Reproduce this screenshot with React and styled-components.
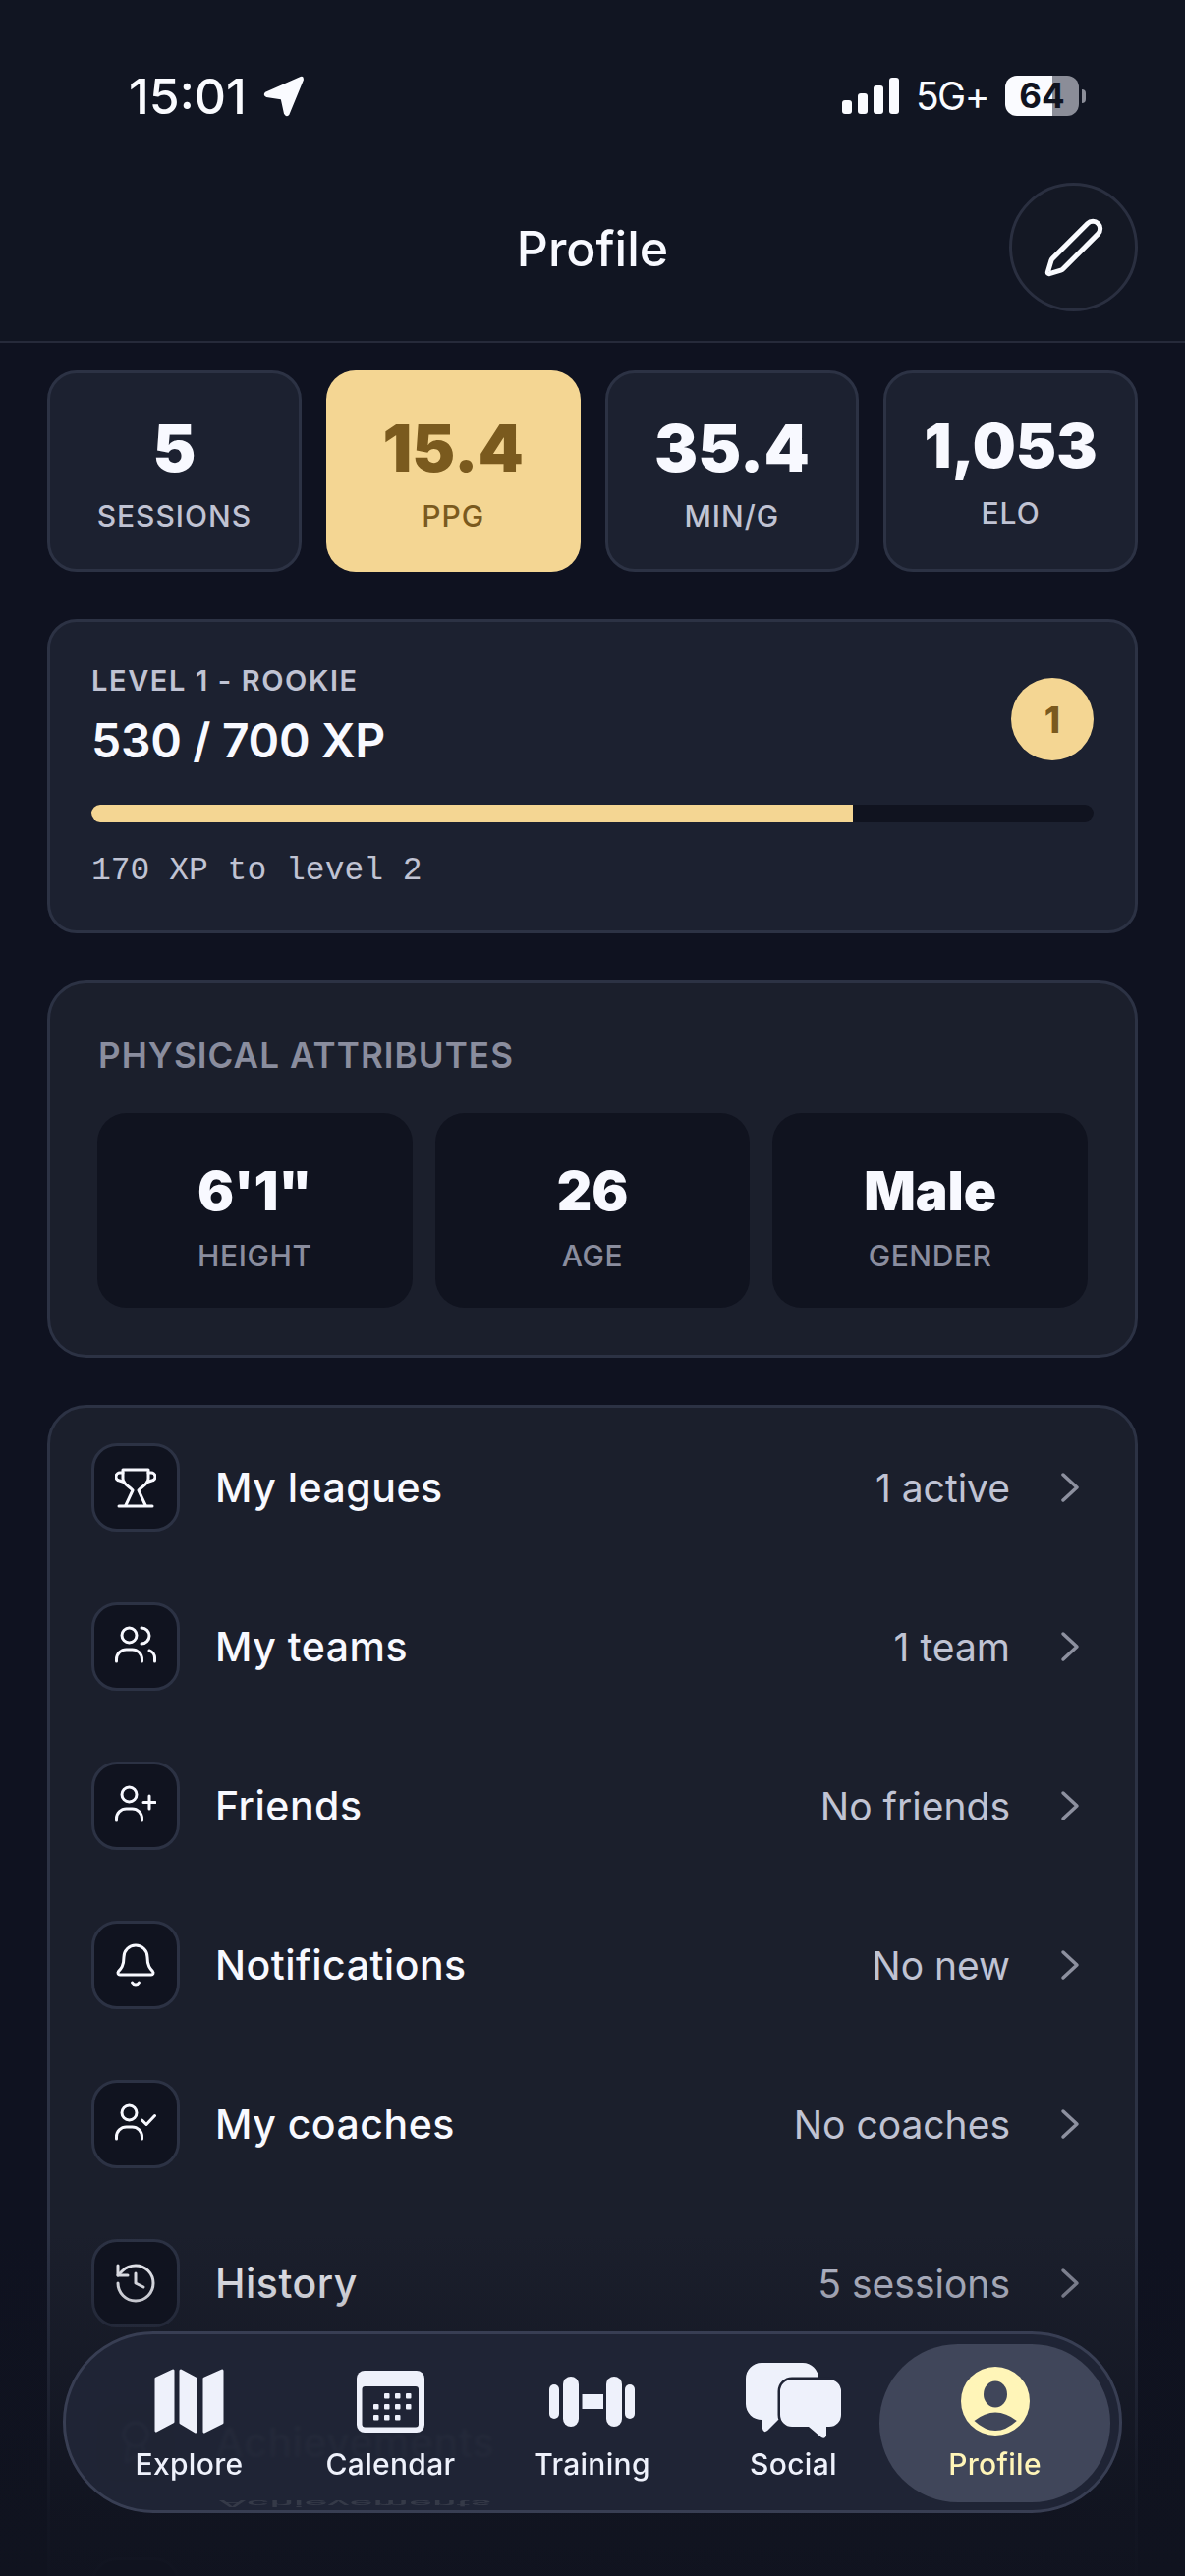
import React from 'react';
import styled, { createGlobalStyle } from 'styled-components';
import { Pen, Bell, History, Award, Settings } from 'lucide-react';

const GlobalStyle = createGlobalStyle`
    html, body {
        margin: 0;
        padding: 0;
        background: #0f1220;
    }
    * {
        box-sizing: border-box;
    }
`;

const stats = [
    { value: '5', label: 'SESSIONS' },
    { value: '15.4', label: 'PPG', active: true },
    { value: '35.4', label: 'MIN/G' },
    { value: '1,053', label: 'ELO', small: true },
];

const attributes = [
    { value: `6'1"`, label: 'HEIGHT' },
    { value: '26', label: 'AGE' },
    { value: 'Male', label: 'GENDER' },
];

/* menu glyphs drawn on a 42px grid */
const Glyph = ({ children }) => (
    <svg width="42" height="42" viewBox="0 0 42 42" fill="none" stroke="#f8f9ff" strokeWidth="3" strokeLinecap="round" strokeLinejoin="round">
        {children}
    </svg>
);

const TrophyIcon = () => (
    <Glyph>
        <path d="M8 3h26v9c0 6-7 8-10 12l7 15M8 3v9c0 6 7 8 10 12l-7 15" />
        <path d="M4 40h34M8 6H5.500a4 4 0 0 0-1 8l4.500 1.500M34 6h2.500a4 4 0 0 1 1 8L33 15.500" />
    </Glyph>
);

const TeamIcon = () => (
    <Glyph>
        <circle cx="14.500" cy="9.500" r="7.500" />
        <path d="M1.500 36v-2a10 10 0 0 1 10-10h6a10 10 0 0 1 10 10v2" />
        <path d="M27 2a8 8 0 0 1 0 16M35 25a8 8 0 0 1 5.500 8v3" />
    </Glyph>
);

const FriendAddIcon = () => (
    <Glyph>
        <circle cx="14.500" cy="9.500" r="7.500" />
        <path d="M1.500 36v-2a10 10 0 0 1 10-10h6a10 10 0 0 1 10 10v2" />
        <path d="M35 11v13M29 17.500h12" />
    </Glyph>
);

const CoachIcon = () => (
    <Glyph>
        <circle cx="14.500" cy="9.500" r="7.500" />
        <path d="M1.500 36v-2a10 10 0 0 1 10-10h6a10 10 0 0 1 10 10v2" />
        <path d="M27.500 17l4.500 4.500 8.500-9" />
    </Glyph>
);

const BellIcon = () => <Bell size={48} strokeWidth={1.5} color="#f8f9ff" />;
const HistoryIcon = () => <History size={48} strokeWidth={1.5} color="#f8f9ff" />;
const AwardIcon = () => <Award size={48} strokeWidth={1.5} color="#f8f9ff" />;
const SettingsIcon = () => <Settings size={48} strokeWidth={1.5} color="#f8f9ff" />;

const menu = [
    { id: 'leagues', Icon: TrophyIcon, title: 'My leagues', value: '1 active' },
    { id: 'teams', Icon: TeamIcon, title: 'My teams', value: '1 team' },
    { id: 'friends', Icon: FriendAddIcon, title: 'Friends', value: 'No friends' },
    { id: 'notifications', Icon: BellIcon, title: 'Notifications', value: 'No new' },
    { id: 'coaches', Icon: CoachIcon, title: 'My coaches', value: 'No coaches' },
    { id: 'history', Icon: HistoryIcon, title: 'History', value: '5 sessions' },
    { id: 'achievements', Icon: AwardIcon, title: 'Achievements', value: '2 / 12' },
    { id: 'settings', Icon: SettingsIcon },
];

const Chevron = () => (
    <svg width="20" height="32" viewBox="0 0 20 32" fill="none" stroke="#8d909f" strokeWidth="3.500" strokeLinecap="round" strokeLinejoin="round">
        <path d="M3 3l14 13L3 29" />
    </svg>
);

const SignalIcon = () => (
    <svg width="58" height="37" viewBox="0 0 58 37" fill="#fafbff">
        <rect x="0" y="23" width="10" height="14" rx="3" />
        <rect x="16" y="16" width="10" height="21" rx="3" />
        <rect x="32" y="8" width="10" height="29" rx="3" />
        <rect x="48" y="0" width="10" height="37" rx="3" />
    </svg>
);

const LocationIcon = () => (
    <svg width="40" height="40" viewBox="0 0 40 40" fill="#fafbff">
        <path d="M36 1L2 16q-3 3 1 5l14 2 3 14q2 4 5 1L39 4q0-4-3-3z" />
    </svg>
);

const ExploreIcon = () => (
    <svg width="71" height="66" viewBox="0 0 71 66" fill="#eef1fb" stroke="#eef1fb" strokeWidth="3" strokeLinejoin="round">
        <path d="M2 10L19 2v52L2 63z" />
        <path d="M27 2l15 8v54l-15-9z" />
        <path d="M51 10l18-8v53l-18 9z" />
    </svg>
);

const CalendarIcon = () => (
    <svg width="69" height="63" viewBox="0 0 69 63">
        <rect width="69" height="63" rx="8" fill="#eef1fb" />
        <rect x="5.500" y="16" width="57.500" height="41.500" rx="3" fill="#1f2435" />
        {[[28, 23], [39, 23], [50, 23], [17, 34], [28, 34], [39, 34], [50, 34], [17, 45], [28, 45], [39, 45]].map(([x, y]) => (
            <rect key={`${x}-${y}`} x={x} y={y} width="5.500" height="5.500" rx="1" fill="#eef1fb" />
        ))}
    </svg>
);

const TrainingIcon = () => (
    <svg width="87" height="51" viewBox="0 0 87 51" fill="#eef1fb">
        <rect x="0" y="8" width="10" height="35" rx="5" />
        <rect x="14" y="0" width="16" height="51" rx="8" />
        <rect x="33.500" y="18" width="21.500" height="15" />
        <rect x="58" y="0" width="16" height="51" rx="8" />
        <rect x="77" y="8" width="10" height="35" rx="5" />
    </svg>
);

const SocialIcon = () => (
    <svg width="98" height="78" viewBox="0 0 98 78">
        <path d="M16 0h42a16 16 0 0 1 16 16v26a16 16 0 0 1-16 16H33L22 69q-4 3-5-2V58A16 16 0 0 1 0 42V16A16 16 0 0 1 16 0z" fill="#eef1fb" />
        <path d="M47 17h38a12 12 0 0 1 12 12v24a12 12 0 0 1-12 12h-3v9q-1 4-5 2L64 65H47a12 12 0 0 1-12-12V29a12 12 0 0 1 12-12z" fill="#eef1fb" stroke="#1f2435" strokeWidth="5" paintOrder="stroke" />
    </svg>
);

const ProfileIcon = () => (
    <svg width="70" height="70" viewBox="0 0 70 70">
        <circle cx="35" cy="35" r="35" fill="#fff5b8" />
        <ellipse cx="35" cy="28" rx="12" ry="13.500" fill="#40465a" />
        <path d="M13.500 55Q35 38 56.800 55 35 75 13.500 55z" fill="#40465a" />
    </svg>
);

const tabs = [
    { Icon: ExploreIcon, label: 'Explore' },
    { Icon: CalendarIcon, label: 'Calendar' },
    { Icon: TrainingIcon, label: 'Training' },
    { Icon: SocialIcon, label: 'Social' },
    { Icon: ProfileIcon, label: 'Profile', active: true },
];

const App = () => (
    <Screen>
        <GlobalStyle />
        <Header>
            <StatusBar>
                <Clock>
                    15:01
                    <LocationIcon />
                </Clock>
                <Indicators>
                    <SignalIcon />
                    <Network>5G+</Network>
                    <Battery>
                        <BatteryBody $level={64}>64</BatteryBody>
                        <BatteryCap />
                    </Battery>
                </Indicators>
            </StatusBar>
            <TitleBar>
                <span />
                <Title>Profile</Title>
                <EditButton>
                    <Pen size={64} strokeWidth={1.9} color="#fafbff" />
                </EditButton>
            </TitleBar>
        </Header>

        <Content>
            <StatGrid>
                {stats.map(stat => (
                    <StatCard key={stat.label} $active={stat.active}>
                        <StatValue $active={stat.active} $small={stat.small}>{stat.value}</StatValue>
                        <StatLabel $active={stat.active} $small={stat.small}>{stat.label}</StatLabel>
                    </StatCard>
                ))}
            </StatGrid>

            <LevelCard>
                <LevelHead>
                    <div>
                        <LevelName>LEVEL 1 - ROOKIE</LevelName>
                        <LevelXp>530 / 700 XP</LevelXp>
                    </div>
                    <LevelBadge>1</LevelBadge>
                </LevelHead>
                <ProgressTrack>
                    <ProgressFill style={{ width: `${Math.ceil((530 / 700) * 100)}%` }} />
                </ProgressTrack>
                <LevelNote>170 XP to level 2</LevelNote>
            </LevelCard>

            <AttributesCard>
                <SectionLabel>PHYSICAL ATTRIBUTES</SectionLabel>
                <AttributeGrid>
                    {attributes.map(item => (
                        <AttributeTile key={item.label}>
                            <AttributeValue>{item.value}</AttributeValue>
                            <AttributeLabel>{item.label}</AttributeLabel>
                        </AttributeTile>
                    ))}
                </AttributeGrid>
            </AttributesCard>

            <MenuCard>
                {menu.map(({ id, Icon, title, value }) => (
                    <MenuRow key={id}>
                        <MenuIcon>
                            <Icon />
                        </MenuIcon>
                        <MenuTitle>{title}</MenuTitle>
                        <MenuValue>{value}</MenuValue>
                        <Chevron />
                    </MenuRow>
                ))}
            </MenuCard>
        </Content>

        <BottomFade />

        <TabBar>
            <TabSheen aria-hidden="true">Achievements</TabSheen>
            {tabs.map(({ Icon, label, active }) => (
                <Tab key={label} $active={active}>
                    <TabIcon>
                        <Icon />
                    </TabIcon>
                    <TabLabel $active={active}>{label}</TabLabel>
                </Tab>
            ))}
        </TabBar>
    </Screen>
);

export default App;

const Screen = styled.div`
    position: relative;
    width: 1206px;
    height: 2622px;
    overflow: hidden;
    background: #0f1220;
    color: #f8f9ff;
    font-family: Inter, "Noto Sans", sans-serif;
`;

const Header = styled.header`
    height: 349px;
    border-bottom: 2px solid #262a3a;
    background: #111522;
`;

const StatusBar = styled.div`
    display: flex;
    justify-content: space-between;
    height: 186px;
    padding: 77px 101px 0 131px;
`;

const Clock = styled.div`
    display: flex;
    align-items: center;
    gap: 17px;
    height: 41px;
    font-size: 50px;
    font-weight: 500;
    color: #fafbff;

    svg {
        width: 42px;
        height: 42px;
    }
`;

const Indicators = styled.div`
    display: flex;
    align-items: center;
    height: 41px;
`;

const Network = styled.span`
    margin: 0 17px;
    font-size: 39px;
    font-weight: 400;
    letter-spacing: -1.5px;
    color: #fafbff;
`;

const Battery = styled.div`
    display: flex;
    align-items: center;
    gap: 3px;
`;

const BatteryBody = styled.div`
    width: 75px;
    height: 41px;
    border-radius: 12px;
    background: linear-gradient(90deg, #fafbff ${props => props.$level}%, #8b8d98 ${props => props.$level}%);
    color: #10131f;
    font-size: 35px;
    font-weight: 700;
    line-height: 41px;
    text-align: center;
`;

const BatteryCap = styled.div`
    width: 4px;
    height: 14px;
    border-radius: 0 4px 4px 0;
    background: #8b8d98;
`;

const TitleBar = styled.div`
    display: grid;
    grid-template-columns: 131px 1fr 131px;
    align-items: center;
    padding: 0 48px;
`;

const Title = styled.h1`
    margin: 2px 0 0;
    font-size: 50px;
    font-weight: 500;
    text-align: center;
`;

const EditButton = styled.button`
    display: flex;
    align-items: center;
    justify-content: center;
    width: 131px;
    height: 131px;
    padding: 0;
    border: 3px solid #2a2f40;
    border-radius: 50%;
    background: #141824;
`;

const Content = styled.main`
    display: flex;
    flex-direction: column;
    gap: 48px;
    padding: 28px 48px 0;
`;

const StatGrid = styled.section`
    display: grid;
    grid-template-columns: repeat(4, 1fr);
    gap: 25px;
`;

const StatCard = styled.div`
    height: 205px;
    padding-top: ${props => (props.$active ? 47 : 44)}px;
    border: ${props => (props.$active ? 'none' : '3px solid #2c3244')};
    border-radius: 30px;
    background: ${props => (props.$active ? '#f4d693' : '#1c2130')};
    text-align: center;
`;

const StatValue = styled.div`
    margin-top: ${props => (props.$small ? -2 : 0)}px;
    font-size: ${props => (props.$small ? 62 : 66)}px;
    font-weight: 900;
    line-height: 64px;
    color: ${props => (props.$active ? '#7a5a1e' : '#f8f9ff')};
`;

const StatLabel = styled.div`
    margin-top: ${props => (props.$small ? 18 : 19)}px;
    font-size: 30px;
    font-weight: 500;
    letter-spacing: 1px;
    line-height: 36px;
    color: ${props => (props.$active ? '#7a5a1e' : '#c0c3d3')};
`;

const LevelCard = styled.section`
    height: 320px;
    padding: 42px 42px 0;
    border: 3px solid #2c3244;
    border-radius: 30px;
    background: #1c2130;
`;

const LevelHead = styled.div`
    display: flex;
    align-items: center;
    justify-content: space-between;
`;

const LevelName = styled.div`
    font-size: 29px;
    font-weight: 600;
    letter-spacing: 1.6px;
    line-height: 36px;
    color: #c0c3d3;
`;

const LevelXp = styled.div`
    margin-top: 15px;
    font-size: 48px;
    font-weight: 600;
    letter-spacing: -0.3px;
    line-height: 56px;
`;

const LevelBadge = styled.div`
    display: flex;
    align-items: center;
    justify-content: center;
    width: 84px;
    height: 84px;
    margin-top: 7px;
    border-radius: 50%;
    background: #f4d693;
    color: #7a5a1e;
    font-size: 37px;
    font-weight: 800;
`;

const ProgressTrack = styled.div`
    height: 18px;
    margin-top: 37px;
    overflow: hidden;
    border-radius: 9px;
    background: #10131f;
`;

const ProgressFill = styled.div`
    height: 100%;
    background: #f4d693;
`;

const LevelNote = styled.div`
    margin-top: 32px;
    font-family: "Liberation Mono", monospace;
    font-size: 33px;
    line-height: 36px;
    color: #c0c3d3;
`;

const AttributesCard = styled.section`
    height: 384px;
    padding: 48px;
    border: 3px solid #2c3244;
    border-radius: 40px;
    background: #1b1f2c;
`;

const SectionLabel = styled.h2`
    margin: 0 0 34px 1px;
    font-size: 35px;
    font-weight: 600;
    letter-spacing: 1.1px;
    line-height: 50px;
    color: #8a8d9e;
`;

const AttributeGrid = styled.div`
    display: grid;
    grid-template-columns: repeat(3, 1fr);
    gap: 23px;
`;

const AttributeTile = styled.div`
    height: 198px;
    padding-top: 49px;
    border-radius: 30px;
    background: #10131f;
    text-align: center;
`;

const AttributeValue = styled.div`
    font-size: 55px;
    font-weight: 900;
    line-height: 60px;
`;

const AttributeLabel = styled.div`
    margin-top: 18px;
    font-size: 30px;
    font-weight: 500;
    letter-spacing: 0.6px;
    line-height: 36px;
    color: #8a8d9e;
`;

const MenuCard = styled.section`
    border: 3px solid #2c3244;
    border-radius: 40px;
    background: #1b1f2c;
`;

const MenuRow = styled.div`
    display: flex;
    align-items: center;
    padding: 36px 56px 36px 42px;
`;

const MenuIcon = styled.div`
    display: flex;
    align-items: center;
    justify-content: center;
    flex: none;
    width: 90px;
    height: 90px;
    border: 3px solid #2c3244;
    border-radius: 26px;
    background: #10131f;
`;

const MenuTitle = styled.div`
    flex: 1;
    margin-left: 36px;
    font-size: 41px;
    font-weight: 500;
    letter-spacing: 0.5px;
`;

const MenuValue = styled.div`
    margin-right: 51px;
    font-size: 39px;
    font-weight: 400;
    color: #c0c3d3;
`;

const BottomFade = styled.div`
    position: absolute;
    left: 0;
    right: 0;
    bottom: 0;
    height: 350px;
    background: linear-gradient(180deg, rgba(16, 19, 31, 0) 0%, rgba(16, 19, 31, 0.88) 80%, rgba(16, 19, 31, 0.96) 100%);
`;

const TabBar = styled.nav`
    position: absolute;
    left: 64px;
    bottom: 64px;
    display: flex;
    width: 1078px;
    height: 185px;
    padding: 0 23px;
    overflow: hidden;
    border: 3px solid #383e53;
    border-radius: 92px;
    background: rgba(32, 37, 54, 0.94);
    backdrop-filter: blur(1.5px);
`;

const TabSheen = styled.span`
    position: absolute;
    left: 155px;
    bottom: -18px;
    font-size: 41px;
    font-weight: 500;
    color: rgba(255, 255, 255, 0.1);
    transform: scaleY(-0.22);
`;

const Tab = styled.div`
    position: relative;
    display: flex;
    flex-direction: column;
    align-items: center;
    flex: 0 0 205px;

    ${props => props.$active && `
        &::before {
            content: '';
            position: absolute;
            top: 10px;
            left: -15px;
            right: -15px;
            bottom: 8px;
            border-radius: 80px;
            background: #40465a;
        }
    `}
`;

const TabIcon = styled.div`
    position: relative;
    display: flex;
    align-items: center;
    justify-content: center;
    height: 80px;
    margin-top: 28px;
`;

const TabLabel = styled.span`
    position: relative;
    margin-top: 6px;
    font-size: 30px;
    font-weight: 500;
    letter-spacing: 0.3px;
    line-height: 36px;
    color: ${props => (props.$active ? '#fff5b8' : '#eef1fb')};
`;
